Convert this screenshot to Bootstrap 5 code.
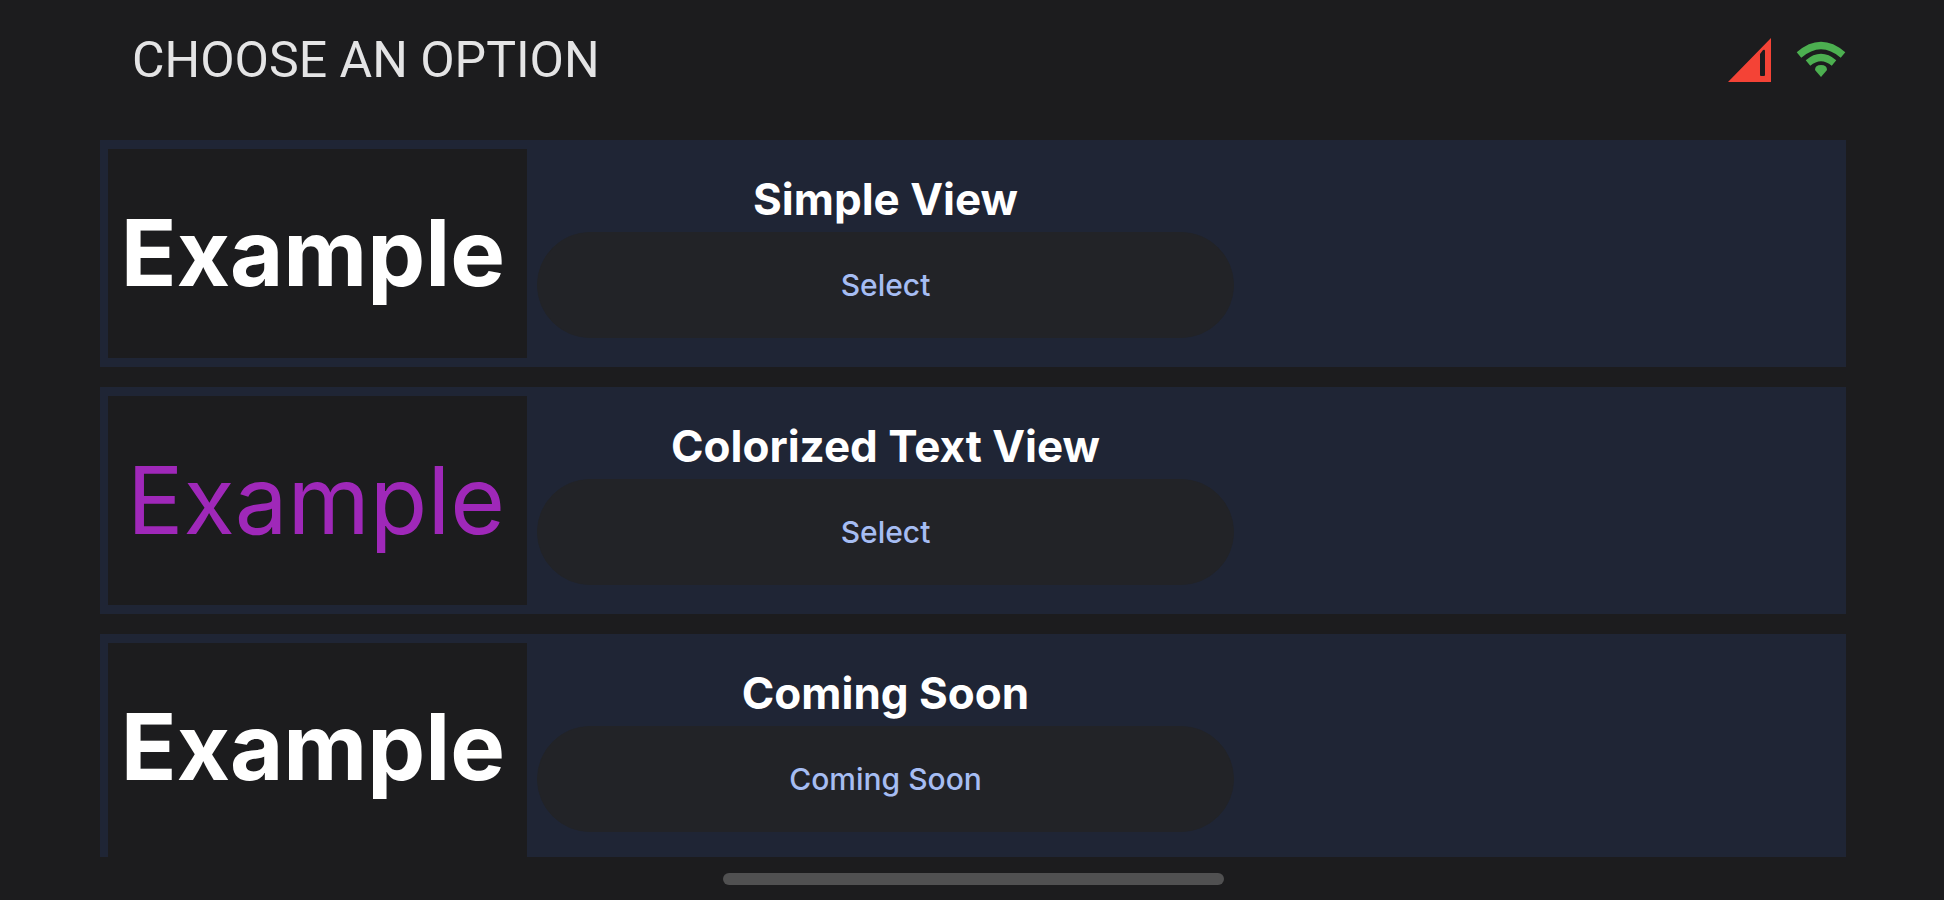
<!DOCTYPE html>
<html lang="en">
<head>
<meta charset="utf-8">
<meta name="viewport" content="width=device-width, initial-scale=1">
<title>Choose an option</title>
<link href="https://cdn.jsdelivr.net/npm/bootstrap@5.3.0/dist/css/bootstrap.min.css" rel="stylesheet">
<style>
  body { background: #1c1c1e; color: #fff; font-family: Inter, "Liberation Sans", sans-serif; }
  .screen { padding: 0 98px 0 100px; }
  .topbar { height: 140px; padding: 0 0 20px 32px; }
  .page-title { font-family: Roboto, "Liberation Sans", sans-serif; font-size: 50px; line-height: 56px; color: #e4e4e5; }
  .status { gap: 24px; }
  .options { min-height: 0; gap: 20px; }
  .option { display: grid; grid-template-columns: 419fr 717fr 602fr; flex: none; height: 227px; padding: 9px 0 9px 8px; background: #1f2535; }
  .option:last-child { padding-bottom: 0; }
  .preview { background: #1c1c1e; font-size: 92px; line-height: 112px; padding: 48px 22px 0 0; }
  .preview-color { color: #9f28b9; font-size: 94px; }
  .choice { padding: 26px 10px 0; }
  .choice-title { font-size: 44px; line-height: 48px; padding-bottom: 9px; }
  .btn-choice { --bs-btn-color: #a6bdf3; --bs-btn-bg: #222327; --bs-btn-border-color: #222327; --bs-btn-hover-color: #c3d2f8; --bs-btn-hover-bg: #292a2f; --bs-btn-active-bg: #292a2f; --bs-btn-active-color: #c3d2f8; font-size: 30px; line-height: 36px; height: 106px; }
  .homebar-row { height: 43px; padding-top: 16px; }
  .homebar { width: 501px; height: 12px; background: #505051; }
</style>
</head>
<body>
<div class="screen vh-100 d-flex flex-column overflow-hidden">
  <header class="topbar flex-shrink-0 d-flex align-items-center justify-content-between">
    <h1 class="page-title fw-normal m-0">CHOOSE AN OPTION</h1>
    <div class="status d-flex align-items-center">
      <svg width="46" height="46" viewBox="0 0 46 46" role="img" aria-label="Mobile signal"><path fill="#f44336" fill-rule="evenodd" d="M45 1V45H2ZM34 17V38Q34 39 35 39H38Q39 39 39 38V14Q39 12 37 13Z"/></svg>
      <svg width="50" height="40" viewBox="0 0 50 40" role="img" aria-label="Wi-Fi" fill="none" stroke="#4caf50" stroke-width="7"><path d="M3 15Q25-4 47 15M12 23Q25 12 38 23"/><path fill="#4caf50" stroke="none" d="M25 25Q31 25 31 30L25 37L19 30Q19 25 25 25Z"/></svg>
    </div>
  </header>
  <main class="options flex-fill d-flex flex-column overflow-hidden">
    <section class="option">
      <div class="preview fw-bold text-end">Example</div>
      <div class="choice text-center">
        <h2 class="choice-title fw-bold m-0">Simple View</h2>
        <button type="button" class="btn btn-choice rounded-pill w-100 fw-medium">Select</button>
      </div>
    </section>
    <section class="option">
      <div class="preview preview-color text-end">Example</div>
      <div class="choice text-center">
        <h2 class="choice-title fw-bold m-0">Colorized Text View</h2>
        <button type="button" class="btn btn-choice rounded-pill w-100 fw-medium">Select</button>
      </div>
    </section>
    <section class="option">
      <div class="preview fw-bold text-end">Example</div>
      <div class="choice text-center">
        <h2 class="choice-title fw-bold m-0">Coming Soon</h2>
        <button type="button" class="btn btn-choice rounded-pill w-100 fw-medium">Coming Soon</button>
      </div>
    </section>
  </main>
  <footer class="homebar-row flex-shrink-0 d-flex justify-content-center">
    <div class="homebar rounded-pill"></div>
  </footer>
</div>
<script src="https://cdn.jsdelivr.net/npm/bootstrap@5.3.0/dist/js/bootstrap.bundle.min.js"></script>
</body>
</html>
